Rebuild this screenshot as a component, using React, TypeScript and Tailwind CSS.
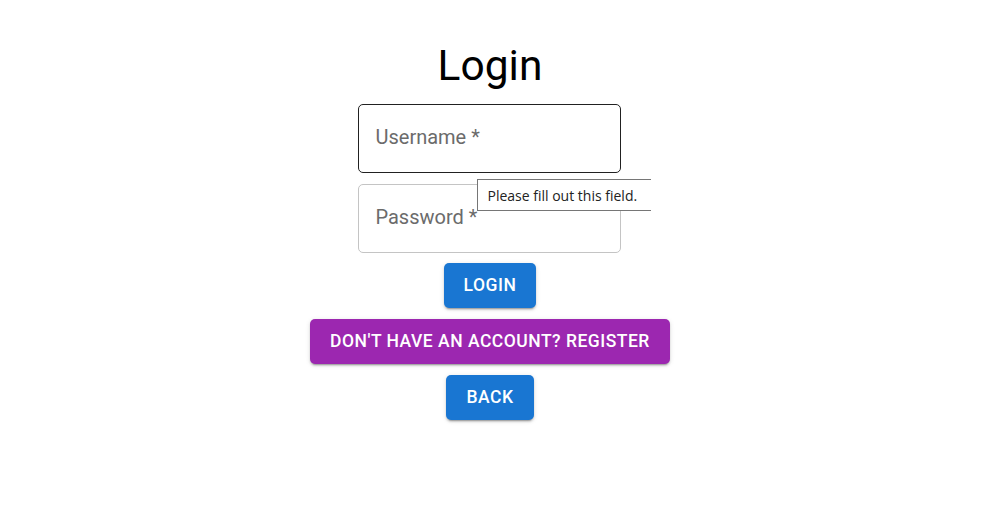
import { useState } from "react";

export default function App() {
  const [username, setUsername] = useState("");
  const [password, setPassword] = useState("");

  const buttonShadow =
    "shadow-[0_3px_1px_-2px_rgba(0,0,0,0.2),0_2px_2px_0_rgba(0,0,0,0.14),0_1px_5px_0_rgba(0,0,0,0.12)]";

  return (
    <div className="min-h-screen bg-white flex flex-col items-center pt-[40px] pr-[8px] font-['Roboto',sans-serif]">
      <h1 className="text-[42.5px] leading-[52px] font-normal text-black">Login</h1>

      <form className="flex flex-col items-center mt-[12px]" onSubmit={(e) => e.preventDefault()}>
        {/* Username field (hovered) */}
        <input
          value={username}
          onChange={(e) => setUsername(e.target.value)}
          placeholder="Username *"
          className="w-[263px] h-[69px] rounded-[5px] border border-[#212121] px-[16px] pb-[3px] text-[20px] text-black placeholder:text-[#6b6b6b] outline-none"
        />

        {/* Password field with validation bubble */}
        <div className="relative mt-[11px]">
          <input
            type="password"
            value={password}
            onChange={(e) => setPassword(e.target.value)}
            placeholder="Password *"
            className="w-[263px] h-[69px] rounded-[5px] border border-[#c4c4c4] px-[16px] pb-[3px] text-[20px] text-black placeholder:text-[#6b6b6b] outline-none"
          />
          <div className="absolute left-[119px] top-[-5px] w-[174px] h-[32px] bg-white border border-r-0 border-[#767676] flex items-center pl-[9px] overflow-hidden">
            <span className="whitespace-nowrap text-[14px] text-[#222] font-['Open_Sans',sans-serif]">
              Please fill out this field.
            </span>
          </div>
        </div>

        <button
          type="submit"
          className={`mt-[10px] h-[45px] px-[20px] rounded-[5px] bg-[#1976d2] text-white text-[17.5px] font-medium tracking-[0.5px] uppercase ${buttonShadow}`}
        >
          Login
        </button>

        <button
          type="button"
          className={`mt-[11px] h-[45px] px-[20px] rounded-[5px] bg-[#9c27b0] text-white text-[17.5px] font-medium tracking-[0.5px] uppercase ${buttonShadow}`}
        >
          Don't have an account? Register
        </button>

        <button
          type="button"
          className={`mt-[11px] h-[45px] px-[20px] rounded-[5px] bg-[#1976d2] text-white text-[17.5px] font-medium tracking-[0.5px] uppercase ${buttonShadow}`}
        >
          Back
        </button>
      </form>
    </div>
  );
}
